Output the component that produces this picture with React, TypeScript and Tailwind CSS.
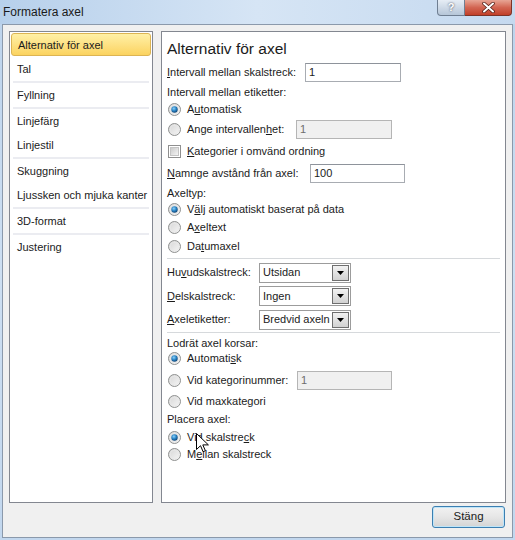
import React from "react";

const Radio = ({ checked }: { checked?: boolean }) => (
  <svg width="13" height="13" viewBox="0 0 13 13" className="shrink-0">
    <defs>
      <linearGradient id="rg" x1="0" y1="0" x2="1" y2="1">
        <stop offset="0" stopColor="#d4d4d4" />
        <stop offset="1" stopColor="#f8f8f8" />
      </linearGradient>
      <radialGradient id="rb" cx="0.4" cy="0.35" r="0.7">
        <stop offset="0" stopColor="#8fd1f8" />
        <stop offset="0.5" stopColor="#2a86c8" />
        <stop offset="1" stopColor="#0e3f6e" />
      </radialGradient>
    </defs>
    <circle cx="6.5" cy="6.5" r="6" fill="url(#rg)" stroke="#8f9190" />
    <circle cx="6.5" cy="6.5" r="4.3" fill="none" stroke="#e8e8e8" strokeWidth="0.8" />
    {checked && <circle cx="6.5" cy="6.5" r="3.2" fill="url(#rb)" />}
  </svg>
);

const Check = () => (
  <span className="box-border w-[13px] h-[13px] shrink-0 border border-[#8f8f8f] bg-white p-[1px]">
    <span className="block w-full h-full bg-gradient-to-br from-[#cbcbcb] to-[#f4f4f4] border border-[#c4c4c4]" />
  </span>
);

const TextBox = ({ value, w, disabled }: { value: string; w: string; disabled?: boolean }) => (
  <div
    className={`${w} h-[19px] flex items-center px-[3px] border ${
      disabled
        ? "bg-[#f0f0f0] border-[#b5b5b5] text-[#6d6d6d]"
        : "bg-white border-[#a8acb2] border-t-[#8e939b]"
    }`}
  >
    {value}
  </div>
);

const Select = ({ value }: { value: string }) => (
  <div className="w-[92px] h-[20px] flex items-center border border-[#9c9c9c] bg-white pl-[3px] pr-[1px]">
    <span className="flex-1 whitespace-nowrap overflow-hidden">{value}</span>
    <span className="w-[17px] h-[16px] flex items-center justify-center border border-[#6f6f6f] bg-gradient-to-b from-[#f2f2f2] to-[#d2d2d2]">
      <svg width="7" height="4" viewBox="0 0 7 4">
        <path d="M0 0h7L3.5 4z" fill="#000" />
      </svg>
    </span>
  </div>
);

const Sep = () => <div className="mx-[2px] h-[2px] bg-[#ebecf1]" />;

const NavItem = ({ label, active }: { label: string; active?: boolean }) => (
  <div className="h-[24px] flex items-start">
    <div
      className={`w-full h-[23px] flex items-center pt-[1px] px-[6px] rounded-[3px] whitespace-nowrap ${
        active
          ? "bg-gradient-to-b from-[#fff0a5] to-[#fbd35f] border border-[#dcb453] px-[5px]"
          : ""
      }`}
    >
      {label}
    </div>
  </div>
);

const Line = ({ h }: { h: string }) => (
  <div className={`${h} flex items-center pr-[3px]`}>
    <div className="w-full h-[1px] bg-[#d6d9dc]" />
  </div>
);

export default function App() {
  return (
    <div className="relative w-[515px] h-[540px] flex flex-col bg-gradient-to-b from-[#bcd3ec] via-[#cddff2] to-[#c2d7ee] font-['Liberation_Sans',Arial,sans-serif] text-[11px] text-[#1b1b1b]">
      {/* title bar */}
      <div className="h-[24px] flex items-start bg-gradient-to-r from-[#b7d0eb] via-[#d6e5f5] to-[#c5d9ef]">
        <span className="pl-[3px] pt-[3px] text-[12px] text-[#1a1a1a]">Formatera axel</span>
        <div className="ml-auto mr-[3px] flex">
          <div className="w-[28px] h-[16px] flex items-center justify-center rounded-bl-[4px] border border-t-0 border-[#6f7e91] bg-gradient-to-b from-[#e6edf5] to-[#b6c6d8] text-[11px] font-bold text-white [text-shadow:0_0_2px_#334]">
            ?
          </div>
          <div className="w-[47px] h-[16px] flex items-center justify-center rounded-br-[4px] border border-t-0 border-l-0 border-[#7d3327] bg-gradient-to-b from-[#e7a595] via-[#d26552] to-[#c13f28]">
            <svg width="13" height="11" viewBox="0 0 13 11">
              <path d="M2 1.5l9 8M11 1.5l-9 8" stroke="#4a1a12" strokeWidth="3.4" strokeLinecap="round" />
              <path d="M2 1.5l9 8M11 1.5l-9 8" stroke="#fff" strokeWidth="2" strokeLinecap="round" />
            </svg>
          </div>
        </div>
      </div>

      {/* client */}
      <div className="flex-1 ml-[2px] mr-[2px] mb-[2px] border border-[#8b99ab] bg-[#f0f0f0] flex flex-col pt-[6px] pl-[6px] pr-[6px]">
        <div className="h-[472px] flex gap-[8px]">
          {/* left nav */}
          <div className="w-[144px] border border-[#838790] bg-white px-[1px] pt-[1px]">
            <NavItem label="Alternativ för axel" active />
            <NavItem label="Tal" />
            <Sep />
            <NavItem label="Fyllning" />
            <Sep />
            <NavItem label="Linjefärg" />
            <NavItem label="Linjestil" />
            <Sep />
            <NavItem label="Skuggning" />
            <NavItem label="Ljussken och mjuka kanter" />
            <Sep />
            <NavItem label="3D-format" />
            <Sep />
            <NavItem label="Justering" />
          </div>

          {/* right panel */}
          <div className="flex-1 border border-[#838790] bg-white pl-[5px] pr-[2px]">
            <div className="h-[30px] flex items-center text-[15.5px] pt-[4px]">Alternativ för axel</div>
            <div className="h-[20px] flex items-center">
              <span className="w-[138px]"><u>I</u>ntervall mellan skalstreck:</span>
              <TextBox value="1" w="w-[96px]" />
            </div>
            <div className="h-[19px] flex items-center pt-[1px]">Intervall mellan etiketter:</div>
            <div className="h-[17px] flex items-center gap-[6px] pl-[1px]">
              <Radio checked />
              <span>A<u>u</u>tomatisk</span>
            </div>
            <div className="h-[22px] flex items-center pl-[1px]">
              <Radio />
              <span className="ml-[6px] w-[109px]">Ange intervallen<u>h</u>et:</span>
              <TextBox value="1" w="w-[96px]" disabled />
            </div>
            <div className="h-[22px] flex items-center gap-[6px] pl-[1px]">
              <Check />
              <span><u>K</u>ategorier i omvänd ordning</span>
            </div>
            <div className="h-[22px] flex items-center">
              <span className="w-[143px]"><u>N</u>amnge avstånd från axel:</span>
              <TextBox value="100" w="w-[95px]" />
            </div>
            <div className="h-[17px] flex items-center pt-[2px]">Axeltyp:</div>
            <div className="h-[17px] flex items-center gap-[6px] pl-[1px]">
              <Radio checked />
              <span>V<u>ä</u>lj automatiskt baserat på data</span>
            </div>
            <div className="h-[19px] flex items-center gap-[6px] pl-[1px]">
              <Radio />
              <span>A<u>x</u>eltext</span>
            </div>
            <div className="h-[18px] flex items-center gap-[6px] pl-[1px]">
              <Radio />
              <span>Da<u>t</u>umaxel</span>
            </div>
            <Line h="h-[6px]" />
            <div className="h-[23px] flex items-center">
              <span className="w-[92px]">Hu<u>v</u>udskalstreck:</span>
              <Select value="Utsidan" />
            </div>
            <div className="h-[24px] flex items-center">
              <span className="w-[92px]"><u>D</u>elskalstreck:</span>
              <Select value="Ingen" />
            </div>
            <div className="h-[23px] flex items-center">
              <span className="w-[92px]"><u>A</u>xeletiketter:</span>
              <Select value="Bredvid axeln" />
            </div>
            <Line h="h-[3px]" />
            <div className="h-[17px] flex items-center pt-[2px]">Lodrät axel korsar:</div>
            <div className="h-[15px] flex items-center gap-[6px] pl-[1px]">
              <Radio checked />
              <span>Automati<u>s</u>k</span>
            </div>
            <div className="h-[28px] flex items-center pl-[1px]">
              <Radio />
              <span className="ml-[6px] w-[110px]">Vid kategorinummer:</span>
              <TextBox value="1" w="w-[95px]" disabled />
            </div>
            <div className="h-[14px] flex items-center gap-[6px] pl-[1px]">
              <Radio />
              <span>Vid maxkate<u>g</u>ori</span>
            </div>
            <div className="h-[22px] flex items-center pt-[1px]">Placera axel:</div>
            <div className="h-[14px] flex items-center gap-[6px] pl-[1px]">
              <Radio checked />
              <span>Vid skalstre<u>c</u>k</span>
            </div>
            <div className="h-[20px] flex items-center gap-[6px] pl-[1px]">
              <Radio />
              <span>M<u>e</u>llan skalstreck</span>
            </div>
          </div>
        </div>

        <div className="flex justify-end pt-[3px] pr-[1px]">
          <button className="w-[73px] h-[22px] rounded-[3px] border border-[#3c7fb1] bg-gradient-to-b from-[#f2f2f2] via-[#e6e6e6] to-[#d4d4d4] shadow-[inset_0_0_0_1px_#bfe5f8] text-[11.5px] text-[#1b1b1b]">
            Stäng
          </button>
        </div>
      </div>

      {/* mouse cursor */}
      <svg className="absolute left-[196px] top-[433px]" width="13" height="21" viewBox="0 0 13 21">
        <path d="M0.5 0.5v16l4-3.8 2.6 6 2.3-1-2.6-5.8h5.6z" fill="#fff" stroke="#000" strokeWidth="1" strokeLinejoin="round" />
      </svg>
    </div>
  );
}
